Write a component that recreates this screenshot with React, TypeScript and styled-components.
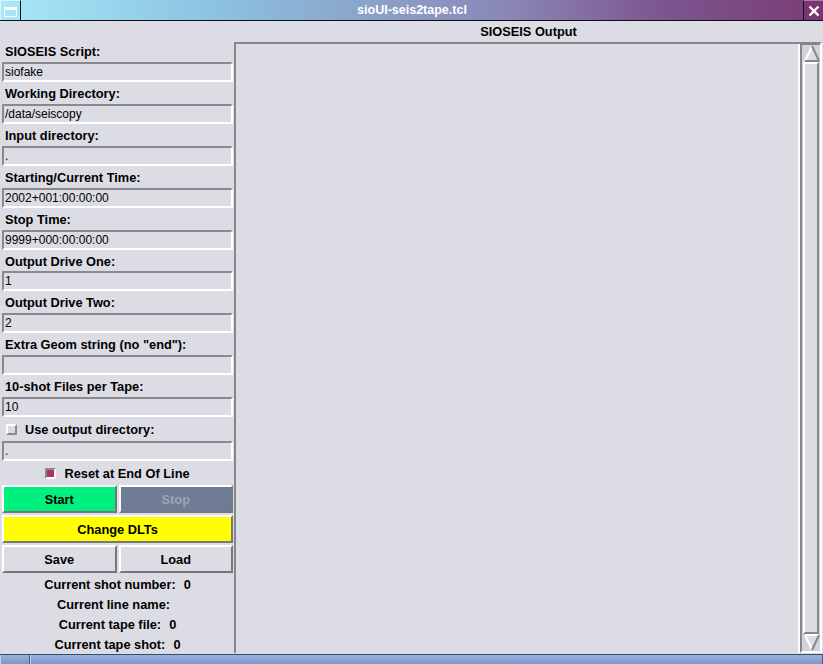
import React from "react";
import styled, { createGlobalStyle } from "styled-components";

const GlobalStyle = createGlobalStyle`
  html, body {
    margin: 0;
    padding: 0;
    background: #dcdce4;
  }
  * {
    box-sizing: border-box;
  }
`;

const Window = styled.div`
  width: 823px;
  height: 664px;
  display: flex;
  flex-direction: column;
  background: #dcdce4;
  font-family: "Liberation Sans", Arial, sans-serif;
  font-size: 12.8px;
  color: #000;
  overflow: hidden;
`;

const TitleBar = styled.div`
  height: 21px;
  display: flex;
  align-items: stretch;
  border-bottom: 1px solid #101018;
  background: linear-gradient(
    to right,
    #a8e8f8 0%,
    #8cc4e2 25%,
    #8aa2c8 45%,
    #8a86b6 62%,
    #7c5690 80%,
    #7a3c74 100%
  );
`;

const MenuButton = styled.div`
  width: 21px;
  border-right: 1px solid #101018;
  border-top: 1px solid #d8f6ff;
  border-left: 1px solid #d8f6ff;
  display: flex;
  align-items: center;
  justify-content: center;
`;

const WinGlyph = styled.div`
  width: 13px;
  height: 10px;
  border: 1px solid #fff;
  border-top-width: 3px;
  margin-top: 2px;
`;

const TitleText = styled.div`
  flex: 1;
  display: flex;
  align-items: center;
  justify-content: center;
  color: #fff;
  font-weight: bold;
  font-size: 12.5px;
`;

const CloseButton = styled.div`
  width: 20px;
  border-left: 1px solid #101018;
  border-top: 1px solid #b07aa8;
  background: #7a3570;
  display: flex;
  align-items: center;
  justify-content: center;
`;

const Body = styled.div`
  flex: 1;
  display: flex;
  min-height: 0;
`;

const LeftPanel = styled.div`
  width: 234px;
  display: flex;
  flex-direction: column;
  padding: 20px 1px 0 2px;
`;

const FieldLabel = styled.div`
  height: 21px;
  display: flex;
  align-items: center;
  font-weight: bold;
  padding-left: 3px;
  white-space: nowrap;
`;

const EntryRow = styled.div`
  height: 21px;
  padding-bottom: 1px;
  display: flex;
`;

const Entry = styled.div`
  flex: 1;
  border-top: 2px solid #8a8a8e;
  border-left: 2px solid #8a8a8e;
  border-bottom: 2px solid #ffffff;
  border-right: 2px solid #ffffff;
  background: #dcdce4;
  display: flex;
  align-items: center;
  padding-left: 1px;
  font-size: 12px;
  color: #000;
`;

const CheckRow = styled.div<{ $center?: boolean }>`
  height: 23px;
  display: flex;
  align-items: center;
  justify-content: ${(p) => (p.$center ? "center" : "flex-start")};
  gap: 8px;
  font-weight: bold;
  padding-left: ${(p) => (p.$center ? "0" : "4px")};
`;

const CheckBox = styled.div<{ $on?: boolean }>`
  width: 11px;
  height: 11px;
  background: ${(p) => (p.$on ? "#b0305e" : "#dcdce4")};
  border-top: 2px solid ${(p) => (p.$on ? "#8a8a8e" : "#ffffff")};
  border-left: 2px solid ${(p) => (p.$on ? "#8a8a8e" : "#ffffff")};
  border-bottom: 2px solid ${(p) => (p.$on ? "#ffffff" : "#8a8a8e")};
  border-right: 2px solid ${(p) => (p.$on ? "#ffffff" : "#8a8a8e")};
`;

const ButtonRow = styled.div<{ $first?: boolean }>`
  display: flex;
  gap: 2px;
  margin-top: ${(p) => (p.$first ? "0" : "2px")};
`;

const Button = styled.div<{ $bg?: string; $fg?: string }>`
  flex: 1;
  height: 28px;
  display: flex;
  align-items: center;
  justify-content: center;
  font-weight: bold;
  background: ${(p) => p.$bg || "#dcdce4"};
  color: ${(p) => p.$fg || "#000"};
  border-top: 2px solid #ffffff;
  border-left: 2px solid #ffffff;
  border-bottom: 2px solid #76767c;
  border-right: 2px solid #76767c;
`;

const StatusRow = styled.div`
  height: 20px;
  display: flex;
  align-items: center;
  justify-content: center;
  gap: 8px;
  font-weight: bold;
  white-space: nowrap;
`;

const StatusBlock = styled.div`
  margin-top: 1px;
  display: flex;
  flex-direction: column;
`;

const RightPanel = styled.div`
  flex: 1;
  display: flex;
  flex-direction: column;
`;

const OutputHeader = styled.div`
  height: 21px;
  display: flex;
  align-items: center;
  justify-content: center;
  font-weight: bold;
`;

const OutputFrame = styled.div`
  flex: 1;
  display: flex;
  border-top: 2px solid #86868c;
  border-left: 2px solid #86868c;
  border-right: 2px solid #ffffff;
  margin-right: 1px;
  margin-bottom: 1px;
`;

const TextArea = styled.div`
  flex: 1;
  border-right: 2px solid #ffffff;
`;

const ScrollTrough = styled.div`
  width: 20px;
  display: flex;
  flex-direction: column;
  border-left: 2px solid #86868c;
  border-top: 1px solid #86868c;
  border-bottom: 2px solid #ffffff;
  padding: 0 0 0 1px;
  background: #d2d2da;
`;

const ArrowBox = styled.div`
  height: 17px;
  display: flex;
  align-items: center;
  justify-content: center;
`;

const Slider = styled.div`
  flex: 1;
  margin: 0 1px 0 0;
  border-top: 2px solid #ffffff;
  border-left: 2px solid #ffffff;
  border-bottom: 2px solid #86868c;
  border-right: 2px solid #86868c;
  background: #dcdce4;
`;

const BottomBar = styled.div`
  height: 10px;
  display: flex;
  border-top: 1px solid #3a4a70;
  background: linear-gradient(to bottom, #9cb0dc, #7e96c8);
`;

const BarSegment = styled.div<{ $w?: number }>`
  width: ${(p) => (p.$w ? `${p.$w}px` : "auto")};
  flex: ${(p) => (p.$w ? "none" : "1")};
  border-right: 1px solid #4a5a84;
  border-left: 1px solid #c0d0f0;
`;

const UpArrow = () => (
  <svg width="16" height="17" viewBox="0 0 16 17">
    <polygon points="8,1 15,16 1,16" fill="#dcdce4" />
    <line x1="8" y1="1" x2="1" y2="16" stroke="#ffffff" strokeWidth="2" />
    <line x1="8" y1="1" x2="15" y2="16" stroke="#86868c" strokeWidth="2" />
    <line x1="1" y1="16" x2="15" y2="16" stroke="#86868c" strokeWidth="2" />
  </svg>
);

const DownArrow = () => (
  <svg width="16" height="17" viewBox="0 0 16 17">
    <polygon points="1,1 15,1 8,16" fill="#dcdce4" />
    <line x1="1" y1="1" x2="15" y2="1" stroke="#ffffff" strokeWidth="2" />
    <line x1="1" y1="1" x2="8" y2="16" stroke="#ffffff" strokeWidth="2" />
    <line x1="15" y1="1" x2="8" y2="16" stroke="#86868c" strokeWidth="2" />
  </svg>
);

const fields: { label: string; value: string }[] = [
  { label: "SIOSEIS Script:", value: "siofake" },
  { label: "Working Directory:", value: "/data/seiscopy" },
  { label: "Input directory:", value: "." },
  { label: "Starting/Current Time:", value: "2002+001:00:00:00" },
  { label: "Stop Time:", value: "9999+000:00:00:00" },
  { label: "Output Drive One:", value: "1" },
  { label: "Output Drive Two:", value: "2" },
  { label: 'Extra Geom string (no "end"):', value: "" },
  { label: "10-shot Files per Tape:", value: "10" },
];

const status: { label: string; value: string }[] = [
  { label: "Current shot number:", value: "0" },
  { label: "Current line name:", value: "" },
  { label: "Current tape file:", value: "0" },
  { label: "Current tape shot:", value: "0" },
];

export default function App() {
  return (
    <>
      <GlobalStyle />
      <Window>
        <TitleBar>
          <MenuButton>
            <WinGlyph />
          </MenuButton>
          <TitleText>sioUI-seis2tape.tcl</TitleText>
          <CloseButton>
            <svg width="12" height="12" viewBox="0 0 12 12">
              <path d="M1.5 1.5 L10.5 10.5 M10.5 1.5 L1.5 10.5" stroke="#fff" strokeWidth="2.4" />
            </svg>
          </CloseButton>
        </TitleBar>
        <Body>
          <LeftPanel>
            {fields.map((f) => (
              <React.Fragment key={f.label}>
                <FieldLabel>{f.label}</FieldLabel>
                <EntryRow>
                  <Entry>{f.value}</Entry>
                </EntryRow>
              </React.Fragment>
            ))}
            <CheckRow>
              <CheckBox />
              <span>Use output directory:</span>
            </CheckRow>
            <EntryRow>
              <Entry>.</Entry>
            </EntryRow>
            <CheckRow $center>
              <CheckBox $on />
              <span>Reset at End Of Line</span>
            </CheckRow>
            <ButtonRow $first>
              <Button $bg="#00f07e">Start</Button>
              <Button $bg="#6e7c96" $fg="#9ca4b0">
                Stop
              </Button>
            </ButtonRow>
            <ButtonRow>
              <Button $bg="#ffff00">Change DLTs</Button>
            </ButtonRow>
            <ButtonRow>
              <Button>Save</Button>
              <Button>Load</Button>
            </ButtonRow>
            <StatusBlock>
              {status.map((s) => (
                <StatusRow key={s.label}>
                  <span>{s.label}</span>
                  <span>{s.value}</span>
                </StatusRow>
              ))}
            </StatusBlock>
          </LeftPanel>
          <RightPanel>
            <OutputHeader>SIOSEIS Output</OutputHeader>
            <OutputFrame>
              <TextArea />
              <ScrollTrough>
                <ArrowBox>
                  <UpArrow />
                </ArrowBox>
                <Slider />
                <ArrowBox>
                  <DownArrow />
                </ArrowBox>
              </ScrollTrough>
            </OutputFrame>
          </RightPanel>
        </Body>
        <BottomBar>
          <BarSegment $w={30} />
          <BarSegment />
        </BottomBar>
      </Window>
    </>
  );
}
